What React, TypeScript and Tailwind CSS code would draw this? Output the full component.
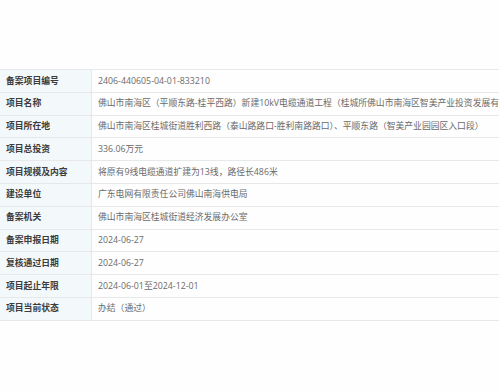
import React from 'react';

type Row = { label: string; value: string };

const rows: Row[] = [
  { label: '备案项目编号', value: '2406-440605-04-01-833210' },
  {
    label: '项目名称',
    value:
      '佛山市南海区（平顺东路-桂平西路）新建10kV电缆通道工程（桂城所佛山市南海区智美产业投资发展有限公司）',
  },
  {
    label: '项目所在地',
    value: '佛山市南海区桂城街道胜利西路（泰山路路口-胜利南路路口）、平顺东路（智美产业园园区入口段）',
  },
  { label: '项目总投资', value: '336.06万元' },
  { label: '项目规模及内容', value: '将原有9线电缆通道扩建为13线，路径长486米' },
  { label: '建设单位', value: '广东电网有限责任公司佛山南海供电局' },
  { label: '备案机关', value: '佛山市南海区桂城街道经济发展办公室' },
  { label: '备案申报日期', value: '2024-06-27' },
  { label: '复核通过日期', value: '2024-06-27' },
  { label: '项目起止年限', value: '2024-06-01至2024-12-01' },
  { label: '项目当前状态', value: '办结（通过）' },
];

export default function App() {
  return (
    <div
      className="w-[499px] h-[392px] bg-[#fefefe] overflow-hidden pt-[69px]"
      style={{ fontFamily: '"Open Sans", "Noto Sans CJK SC", sans-serif' }}
    >
      <div className="border-t border-[#e6e8ea]">
        {rows.map((row) => (
          <div
            key={row.label}
            className="flex h-[22.8px] border-b border-[#e6e8ea] text-[8.8px] leading-none"
          >
            <div className="w-[92px] shrink-0 flex items-center pl-[6px] bg-[#f3f8fb] border-r border-[#e3e8ec] font-semibold text-[#3c3c3c]">
              {row.label}
            </div>
            <div className="flex-1 flex items-center pl-[6px] whitespace-nowrap overflow-hidden text-[#6a6a6a]">
              {row.value}
            </div>
          </div>
        ))}
      </div>
    </div>
  );
}
